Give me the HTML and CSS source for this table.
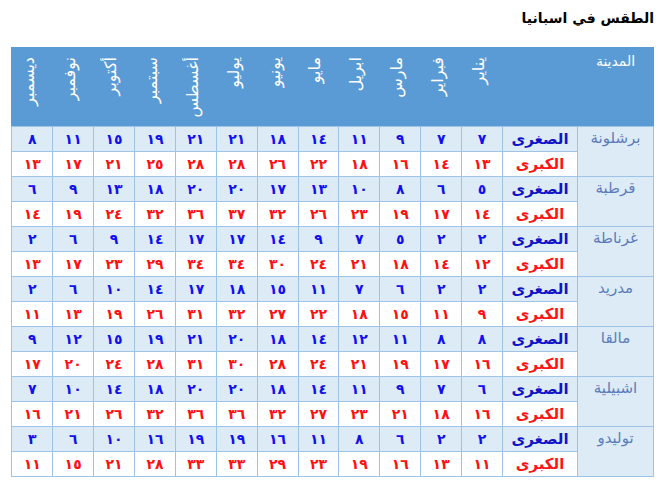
FILE: index.html
```html
<!DOCTYPE html>
<html lang="ar" dir="rtl">
<head>
<meta charset="utf-8">
<title>الطقس في اسبانيا</title>
<link rel="stylesheet" href="styles.css">
</head>
<body>
<div class="page">
  <h1 class="title">الطقس في اسبانيا</h1>
  <table class="weather">
    <colgroup>
      <col class="col-city">
      <col class="col-label">
      <col span="12" class="col-month">
    </colgroup>
    <thead>
      <tr class="head">
        <th class="city-head">المدينة</th>
        <th></th>
        <th><span class="vt">يناير</span></th>
        <th><span class="vt">فبراير</span></th>
        <th><span class="vt">مارس</span></th>
        <th><span class="vt">ابريل</span></th>
        <th><span class="vt">مايو</span></th>
        <th><span class="vt">يونيو</span></th>
        <th><span class="vt">يوليو</span></th>
        <th><span class="vt">أغسطس</span></th>
        <th><span class="vt">سبتمبر</span></th>
        <th><span class="vt">أكتوبر</span></th>
        <th><span class="vt">نوفمبر</span></th>
        <th><span class="vt">ديسمبر</span></th>
      </tr>
    </thead>
    <tbody>
      <tr class="min"><td class="city" rowspan="2">برشلونة</td><td class="label">الصغرى</td><td>٧</td><td>٧</td><td>٩</td><td>١١</td><td>١٤</td><td>١٨</td><td>٢١</td><td>٢١</td><td>١٩</td><td>١٥</td><td>١١</td><td>٨</td></tr>
      <tr class="max"><td class="label">الكبرى</td><td>١٣</td><td>١٤</td><td>١٦</td><td>١٨</td><td>٢٢</td><td>٢٦</td><td>٢٨</td><td>٢٨</td><td>٢٥</td><td>٢١</td><td>١٧</td><td>١٣</td></tr>

      <tr class="min"><td class="city" rowspan="2">قرطبة</td><td class="label">الصغرى</td><td>٥</td><td>٦</td><td>٨</td><td>١٠</td><td>١٣</td><td>١٧</td><td>٢٠</td><td>٢٠</td><td>١٨</td><td>١٣</td><td>٩</td><td>٦</td></tr>
      <tr class="max"><td class="label">الكبرى</td><td>١٤</td><td>١٧</td><td>١٩</td><td>٢٣</td><td>٢٦</td><td>٣٢</td><td>٣٧</td><td>٣٦</td><td>٣٢</td><td>٢٤</td><td>١٩</td><td>١٤</td></tr>

      <tr class="min"><td class="city" rowspan="2">غرناطة</td><td class="label">الصغرى</td><td>٢</td><td>٢</td><td>٥</td><td>٧</td><td>٩</td><td>١٤</td><td>١٧</td><td>١٧</td><td>١٤</td><td>٩</td><td>٦</td><td>٢</td></tr>
      <tr class="max"><td class="label">الكبرى</td><td>١٢</td><td>١٤</td><td>١٨</td><td>٢١</td><td>٢٤</td><td>٣٠</td><td>٣٤</td><td>٣٤</td><td>٢٩</td><td>٢٣</td><td>١٧</td><td>١٣</td></tr>

      <tr class="min"><td class="city" rowspan="2">مدريد</td><td class="label">الصغرى</td><td>٢</td><td>٢</td><td>٦</td><td>٧</td><td>١١</td><td>١٥</td><td>١٨</td><td>١٧</td><td>١٤</td><td>١٠</td><td>٦</td><td>٢</td></tr>
      <tr class="max"><td class="label">الكبرى</td><td>٩</td><td>١١</td><td>١٥</td><td>١٨</td><td>٢٢</td><td>٢٧</td><td>٣٢</td><td>٣١</td><td>٢٦</td><td>١٩</td><td>١٣</td><td>١١</td></tr>

      <tr class="min"><td class="city" rowspan="2">مالقا</td><td class="label">الصغرى</td><td>٨</td><td>٨</td><td>١١</td><td>١٢</td><td>١٤</td><td>١٨</td><td>٢٠</td><td>٢١</td><td>١٩</td><td>١٥</td><td>١٢</td><td>٩</td></tr>
      <tr class="max"><td class="label">الكبرى</td><td>١٦</td><td>١٧</td><td>١٩</td><td>٢١</td><td>٢٤</td><td>٢٨</td><td>٣٠</td><td>٣١</td><td>٢٨</td><td>٢٤</td><td>٢٠</td><td>١٧</td></tr>

      <tr class="min"><td class="city" rowspan="2">اشبيلية</td><td class="label">الصغرى</td><td>٦</td><td>٧</td><td>٩</td><td>١١</td><td>١٤</td><td>١٨</td><td>٢٠</td><td>٢٠</td><td>١٨</td><td>١٤</td><td>١٠</td><td>٧</td></tr>
      <tr class="max"><td class="label">الكبرى</td><td>١٦</td><td>١٨</td><td>٢١</td><td>٢٣</td><td>٢٧</td><td>٣٢</td><td>٣٦</td><td>٣٦</td><td>٣٢</td><td>٢٦</td><td>٢١</td><td>١٦</td></tr>

      <tr class="min"><td class="city" rowspan="2">توليدو</td><td class="label">الصغرى</td><td>٢</td><td>٢</td><td>٦</td><td>٨</td><td>١١</td><td>١٦</td><td>١٩</td><td>١٩</td><td>١٦</td><td>١٠</td><td>٦</td><td>٣</td></tr>
      <tr class="max"><td class="label">الكبرى</td><td>١١</td><td>١٣</td><td>١٦</td><td>١٩</td><td>٢٣</td><td>٢٩</td><td>٣٣</td><td>٣٣</td><td>٢٨</td><td>٢١</td><td>١٥</td><td>١١</td></tr>
    </tbody>
  </table>
</div>
</body>
</html>
```

FILE: styles.css
```css
html, body {
  margin: 0;
  padding: 0;
  background: #ffffff;
}

body {
  font-family: "DejaVu Sans", sans-serif;
}

.page {
  padding: 8px 10px 0 12px;
}

.title {
  margin: 0 0 18px 0;
  font-size: 14px;
  line-height: 21px;
  font-weight: bold;
  color: #000000;
  text-align: right;
}

.weather {
  width: 642px;
  table-layout: fixed;
  border-collapse: collapse;
  direction: rtl;
}

.col-city {
  width: 76px;
}

.col-label {
  width: 75px;
}

.col-month {
  width: 40.9px;
}

.head th {
  height: 73px;
  padding: 0;
  background: #5b9bd5;
  border: 1px solid #5b9bd5;
  border-bottom-color: #9dc3e6;
  color: #ffffff;
  font-weight: normal;
  font-size: 14px;
  line-height: 1;
  vertical-align: top;
  text-align: center;
}

.head .city-head {
  padding-top: 5px;
  font-size: 14px;
  line-height: 16px;
}

.vt {
  display: inline-block;
  vertical-align: top;
  margin-top: 9px;
  margin-right: 6px;
  writing-mode: vertical-rl;
  transform: rotate(180deg);
  line-height: 18px;
  font-size: 16px;
}

.weather td {
  height: 24px;
  padding: 0;
  border: 1px solid #9dc3e6;
  text-align: center;
  vertical-align: middle;
  font-weight: bold;
  font-size: 14px;
  line-height: 16px;
}

.min td {
  background: #ddebf7;
  color: #1111ee;
}

.max td {
  background: #ffffff;
  color: #ff1010;
}

.weather td.city {
  background: #ddebf7;
  color: #5b7cb9;
  font-weight: normal;
  font-size: 15px;
  vertical-align: top;
  padding-top: 3px;
}

.weather td.label {
  font-size: 15px;
}

.min td.label {
  color: #1212c8;
}

.max td.label {
  color: #ff1414;
}
```
